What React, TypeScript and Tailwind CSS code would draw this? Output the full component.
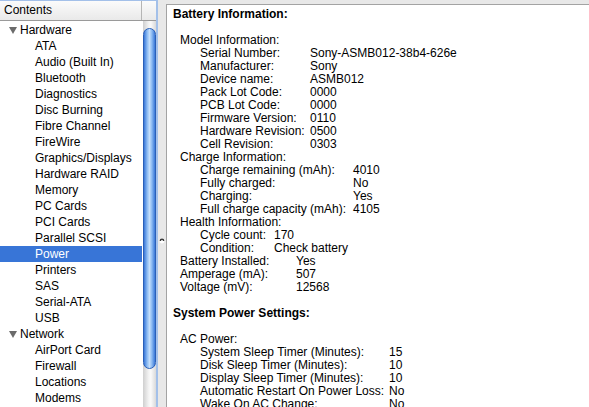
import React from "react";

type Item = { label: string; selected?: boolean };
type Group = { title: string; items: Item[] };

const tree: Group[] = [
  {
    title: "Hardware",
    items: [
      { label: "ATA" },
      { label: "Audio (Built In)" },
      { label: "Bluetooth" },
      { label: "Diagnostics" },
      { label: "Disc Burning" },
      { label: "Fibre Channel" },
      { label: "FireWire" },
      { label: "Graphics/Displays" },
      { label: "Hardware RAID" },
      { label: "Memory" },
      { label: "PC Cards" },
      { label: "PCI Cards" },
      { label: "Parallel SCSI" },
      { label: "Power", selected: true },
      { label: "Printers" },
      { label: "SAS" },
      { label: "Serial-ATA" },
      { label: "USB" },
    ],
  },
  {
    title: "Network",
    items: [
      { label: "AirPort Card" },
      { label: "Firewall" },
      { label: "Locations" },
      { label: "Modems" },
    ],
  },
];

// lignes du panneau de droite
type Line =
  | { kind: "title"; text: string }
  | { kind: "blank" }
  | { kind: "head"; text: string }
  | { kind: "pair"; indent: number; width: number; label: string; value: string };

const pair = (indent: number, width: number, label: string, value: string): Line => ({
  kind: "pair",
  indent,
  width,
  label,
  value,
});

const lines: Line[] = [
  { kind: "title", text: "Battery Information:" },
  { kind: "blank" },
  { kind: "head", text: "Model Information:" },
  pair(27, 110, "Serial Number:", "Sony-ASMB012-38b4-626e"),
  pair(27, 110, "Manufacturer:", "Sony"),
  pair(27, 110, "Device name:", "ASMB012"),
  pair(27, 110, "Pack Lot Code:", "0000"),
  pair(27, 110, "PCB Lot Code:", "0000"),
  pair(27, 110, "Firmware Version:", "0110"),
  pair(27, 110, "Hardware Revision:", "0500"),
  pair(27, 110, "Cell Revision:", "0303"),
  { kind: "head", text: "Charge Information:" },
  pair(27, 153, "Charge remaining (mAh):", "4010"),
  pair(27, 153, "Fully charged:", "No"),
  pair(27, 153, "Charging:", "Yes"),
  pair(27, 153, "Full charge capacity (mAh):", "4105"),
  { kind: "head", text: "Health Information:" },
  pair(27, 74, "Cycle count:", "170"),
  pair(27, 74, "Condition:", "Check battery"),
  pair(7, 116, "Battery Installed:", "Yes"),
  pair(7, 116, "Amperage (mA):", "507"),
  pair(7, 116, "Voltage (mV):", "12568"),
  { kind: "blank" },
  { kind: "title", text: "System Power Settings:" },
  { kind: "blank" },
  { kind: "head", text: "AC Power:" },
  pair(27, 189, "System Sleep Timer (Minutes):", "15"),
  pair(27, 189, "Disk Sleep Timer (Minutes):", "10"),
  pair(27, 189, "Display Sleep Timer (Minutes):", "10"),
  pair(27, 189, "Automatic Restart On Power Loss:", "No"),
  pair(27, 189, "Wake On AC Change:", "No"),
];

function Disclosure() {
  return (
    <svg width="8" height="7" viewBox="0 0 8 7" className="shrink-0">
      <path d="M0 0 H8 L4 7 Z" fill="#6b6b6b" />
    </svg>
  );
}

function Sidebar() {
  return (
    <div className="flex w-[158px] shrink-0 flex-col border-t border-r-2 border-[#a3c0e9] bg-white">
      {/* en-tête de colonne */}
      <div className="flex h-[20px] shrink-0 border-b border-[#9a9a9a] bg-[linear-gradient(#fbfbfb,#e9e9e9)]">
        <div className="w-[142px] border-r border-[#b5b5b5] pl-[4px] leading-[19px] text-black">Contents</div>
        <div className="flex-1" />
      </div>
      <div className="flex min-h-0 flex-1">
        <div className="w-[143px] overflow-hidden pt-[1px]">
          {tree.map((g) => (
            <div key={g.title}>
              <div className="flex h-[16px] items-center gap-[3px] pl-[9px] leading-[16px]">
                <Disclosure />
                <span>{g.title}</span>
              </div>
              {g.items.map((it) => (
                <div
                  key={it.label}
                  className={
                    "h-[16px] w-[142px] pl-[35px] leading-[16px] " +
                    (it.selected ? "bg-[#3875d7] text-white" : "text-black")
                  }
                >
                  {it.label}
                </div>
              ))}
            </div>
          ))}
        </div>
        {/* barre de défilement */}
        <div className="w-[13px] bg-[linear-gradient(to_right,#cfcfcf,#f4f4f4_45%,#fafafa_60%,#d9d9d9)] pt-[7px]">
          <div className="h-[341px] w-[13px] rounded-full border border-[#2a5fb8] bg-[linear-gradient(to_right,#3a78d8,#8fbdf3_30%,#c4defb_50%,#8fbdf3_70%,#3a78d8)]" />
        </div>
      </div>
    </div>
  );
}

function Splitter() {
  return (
    <div className="flex w-[8px] shrink-0 justify-center bg-[#e8e8e8] pt-[238px]">
      <svg width="6" height="6" viewBox="0 0 6 6">
        <circle cx="3" cy="3" r="2.4" fill="#ffffff" />
        <path d="M0.6 3 A2.4 2.4 0 0 1 5.4 3 L4 3 A1 1 0 0 0 2 3 Z" fill="#3a3a3a" />
      </svg>
    </div>
  );
}

function Details() {
  return (
    <div className="mt-[4px] min-w-0 flex-1 overflow-hidden border-t border-l border-[#a3a3a3] bg-white pt-[3px] pl-[6px] leading-[13px] text-black">
      {lines.map((l, i) => {
        if (l.kind === "blank") return <div key={i} className="h-[13px]" />;
        if (l.kind === "title")
          return (
            <div key={i} className="h-[13px] whitespace-nowrap font-bold">
              {l.text}
            </div>
          );
        if (l.kind === "head")
          return (
            <div key={i} className="h-[13px] whitespace-nowrap pl-[7px]">
              {l.text}
            </div>
          );
        return (
          <div key={i} className="flex h-[13px] whitespace-nowrap" style={{ paddingLeft: l.indent }}>
            <span className="shrink-0" style={{ width: l.width }}>
              {l.label}
            </span>
            <span>{l.value}</span>
          </div>
        );
      })}
    </div>
  );
}

export default function App() {
  return (
    <div className="flex h-[407px] w-[589px] overflow-hidden bg-[#e8e8e8] font-['Liberation_Sans',Arial,sans-serif] text-[12px]">
      <Sidebar />
      <Splitter />
      <Details />
    </div>
  );
}
